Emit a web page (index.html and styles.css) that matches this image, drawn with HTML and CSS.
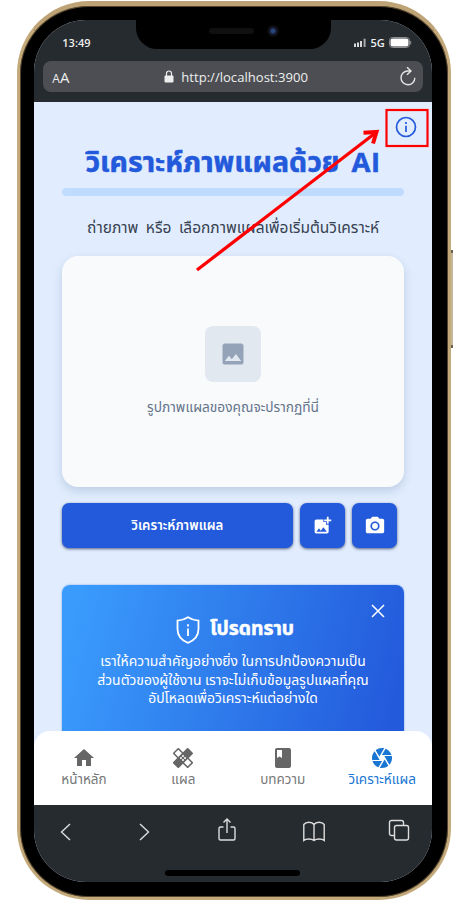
FILE: index.html
```html
<!DOCTYPE html>
<html lang="th">
<head>
<meta charset="utf-8">
<title>วิเคราะห์ภาพแผลด้วย AI</title>
<link rel="stylesheet" href="styles.css">
</head>
<body>
<div class="phone">
  <div class="screen">
    <header class="browser">
      <div class="status">
        <span class="time">13:49</span>
        <span class="signal">
          <svg width="14" height="10" viewBox="0 0 14 10" fill="#d8d8d8"><rect x="1" y="5.5" width="2" height="3.5"/><rect x="4" y="4.5" width="2" height="4.5"/><rect x="7" y="3" width="2" height="6"/><rect x="10.6" y=".7" width="2" height="8.3" fill="#a5a7a9"/></svg>
          <span>5G</span>
          <svg width="23" height="11" viewBox="0 0 23 11"><rect x=".5" y=".5" width="20" height="10" rx="3" fill="none" stroke="#8c8f91"/><rect x="1.5" y="1.5" width="18" height="8" rx="2" fill="#fff"/><path d="M21.7 4v3.5" stroke="#8c8f91"/></svg>
        </span>
      </div>
      <div class="address">
        <span class="aa"><small>A</small>A</span>
        <span class="url">
          <svg width="10" height="13" viewBox="0 0 10 13"><rect x=".5" y="5.5" width="9" height="7" rx="1" fill="#eee"/><path d="M2.500 6V3.500a2.500 2.500 0 0 1 5 0V6" fill="none" stroke="#eee" stroke-width="1.200"/></svg>
          http://localhost:3900
        </span>
        <svg class="reload" width="18" height="20" viewBox="0 0 18 20" fill="none" stroke="#e4e4e4" stroke-width="1.400"><path d="M11.500 4H8.800a6.900 6.900 0 1 0 7 6.800M8 .2l4 3.800-4 3.800"/></svg>
      </div>
    </header>
    <div class="notch"><i class="speaker"></i><i class="camera"></i></div>

    <main class="page">
      <h1><span class="fit">วิเคราะห์ภาพแผลด้วย</span> <span class="latin">AI</span></h1>
      <div class="rule"></div>
      <p class="lead">ถ่ายภาพ หรือ เลือกภาพแผลเพื่อเริ่มต้นวิเคราะห์</p>
      <section class="preview">
        <div class="thumb"><svg width="28" height="28" viewBox="0 0 24 24" fill="#94a3b8"><path d="M21 19V5c0-1.100-.9-2-2-2H5c-1.100 0-2 .9-2 2v14c0 1.100.9 2 2 2h14c1.100 0 2-.9 2-2zM8.500 13.500l2.500 3.010L14.500 12l4.500 6H5l3.500-4.500z"/></svg></div>
        <p>รูปภาพแผลของคุณจะปรากฏที่นี่</p>
      </section>
      <div class="actions">
        <button class="analyse">วิเคราะห์ภาพแผล</button>
        <button class="square"><svg width="21" height="21" viewBox="0 0 24 24" fill="#fff"><path d="M19 7v2.990s-1.990.010-2 0V7h-3s.010-1.990 0-2h3V2h2v3h3v2h-3zm-3 4V8h-3V5H5c-1.100 0-2 .9-2 2v12c0 1.100.9 2 2 2h12c1.100 0 2-.9 2-2v-8h-3zM5 19l3-4 2 3 3-4 4 5H5z"/></svg></button>
        <button class="square"><svg width="22" height="22" viewBox="0 0 24 24" fill="#fff"><circle cx="12" cy="12" r="3.200"/><path d="M9 2L7.170 4H4c-1.100 0-2 .9-2 2v12c0 1.100.9 2 2 2h16c1.100 0 2-.9 2-2V6c0-1.100-.9-2-2-2h-3.170L15 2H9zm3 15c-2.760 0-5-2.240-5-5s2.240-5 5-5 5 2.240 5 5-2.240 5-5 5z"/></svg></button>
      </div>
      <section class="notice">
        <svg class="close" width="14" height="14" viewBox="0 0 14 14" stroke="#fff" stroke-width="1.500"><path d="M1 1l12 12M13 1L1 13"/></svg>
        <div class="notice-head">
          <svg width="24" height="28" viewBox="0 0 24 28" fill="none" stroke="#fff" stroke-width="1.800"><path d="M12 1.200C9 3.200 5 4.300 1.500 4.600V13c0 6.500 4 11.300 10.500 13.800C18.500 24.300 22.500 19.500 22.500 13V4.600C19 4.300 15 3.200 12 1.200z"/><path d="M12 12.500V20M12 8.300v2.200"/></svg>
          <h2>โปรดทราบ</h2>
        </div>
        <p>เราให้ความสำคัญอย่างยิ่ง ในการปกป้องความเป็น<br>ส่วนตัวของผู้ใช้งาน เราจะไม่เก็บข้อมูลรูปแผลที่คุณ<br>อัปโหลดเพื่อวิเคราะห์แต่อย่างใด</p>
      </section>
    </main>

    <nav class="tabs">
      <a><svg width="24" height="24" viewBox="0 0 24 24" fill="#666"><path d="M10 20v-6h4v6h5v-8h3L12 3 2 12h3v8z"/></svg><span>หน้าหลัก</span></a>
      <a><svg width="24" height="24" viewBox="0 0 24 24" fill="#666"><path d="M17.730 12.020l3.980-3.980a1 1 0 0 0 0-1.410l-4.340-4.340a1 1 0 0 0-1.410 0l-3.980 3.980L8 2.290a1 1 0 0 0-1.410 0L2.250 6.630a1 1 0 0 0 0 1.410l3.980 3.980L2.250 16a1 1 0 0 0 0 1.410l4.340 4.340a1 1 0 0 0 1.410 0l3.980-3.980 3.980 3.980a1 1 0 0 0 1.410 0l4.340-4.340a1 1 0 0 0 0-1.410zM12 9a1 1 0 1 0 0 2 1 1 0 0 0 0-2zM7.290 10.960L10.910 7.330L7.290 3.710L3.660 7.330zM10 13a1 1 0 1 0 0-2 1 1 0 0 0 0 2zm2 2a1 1 0 1 0 0-2 1 1 0 0 0 0 2zm2-4a1 1 0 1 0 0 2 1 1 0 0 0 0-2zm2.660 9.340l3.620-3.630-3.620-3.620-3.630 3.630z" fill-rule="evenodd"/></svg><span>แผล</span></a>
      <a><svg width="24" height="24" viewBox="0 0 24 24" fill="#666"><path d="M18 2H6c-1.100 0-2 .9-2 2v16c0 1.100.9 2 2 2h12c1.100 0 2-.9 2-2V4c0-1.100-.9-2-2-2zM6 4h5v8l-2.500-1.500L6 12V4z"/></svg><span>บทความ</span></a>
      <a class="on"><svg width="24" height="24" viewBox="0 0 24 24" fill="#1976d2"><path d="M9.400 10.500l4.770-8.260C13.470 2.090 12.750 2 12 2c-2.400 0-4.600.85-6.320 2.250l3.660 6.350.06-.1zM21.540 9c-.92-2.920-3.150-5.260-6-6.340L11.880 9h9.660zm.26 1h-7.490l.29.500 4.760 8.250C21 16.970 22 14.610 22 12c0-.69-.07-1.350-.2-2zM8.540 12l-3.900-6.750C3.010 7.030 2 9.390 2 12c0 .69.07 1.350.2 2h7.490l-1.150-2zm-6.080 3c.92 2.920 3.150 5.260 6 6.340L12.120 15H2.460zm11.270 0l-3.900 6.760c.7.150 1.420.240 2.170.240 2.400 0 4.600-.85 6.320-2.250l-3.660-6.350-.93 1.600z"/></svg><span>วิเคราะห์แผล</span></a>
    </nav>

    <footer class="toolbar">
      <svg width="20" height="24" viewBox="0 0 20 24"><path d="M14 4L5.500 12 14 20"/></svg>
      <svg width="20" height="24" viewBox="0 0 20 24"><path d="M6 4l8.500 8L6 20"/></svg>
      <svg width="20" height="24" viewBox="0 0 20 24"><path d="M6.500 7H3.500a1.500 1.500 0 0 0-1.500 1.500v10A1.500 1.500 0 0 0 3.500 20h13a1.500 1.500 0 0 0 1.500-1.500v-10A1.500 1.500 0 0 0 16.500 7h-3M10 13V-1M6.500 2.500L10-1l3.500 3.500"/></svg>
      <svg width="24" height="24" viewBox="0 0 24 24"><path d="M12 20V4.500C10 1.500 4 1.500 1.800 4.500V20.500C4 18.500 9.500 18.500 12 20.500 14.500 18.500 20 18.500 22.200 20.500V4.500C20 1.500 14 1.500 12 4.500"/></svg>
      <svg width="22" height="24" viewBox="0 0 22 24"><path d="M6 15.500H3.500A2 2 0 0 1 1.500 13.500v-11a2 2 0 0 1 2-2h10a2 2 0 0 1 2 2V5"/><rect x="6.500" y="5.500" width="14" height="14.500" rx="2"/></svg>
      <i class="home"></i>
    </footer>
  </div>
</div>
<i class="side"></i>
<svg class="info" width="22" height="22" viewBox="0 0 22 22" fill="none" stroke="#2359db" stroke-width="1.700"><circle cx="11" cy="11" r="9.500"/><path d="M11 9.700V16M11 6v2"/></svg>
<svg class="marks" width="453" height="919" viewBox="0 0 453 919" fill="none" stroke="#f00"><rect x="386.500" y="110" width="41" height="36" stroke-width="2.200"/><path d="M197 270L376 132.500" stroke-width="3.300"/><path d="M363.500 132.700L376.500 132L373 143.500" stroke-width="4"/></svg>
</body>
</html>
```
FILE: styles.css
```css
* { box-sizing: border-box; }
body { margin: 0; width: 453px; height: 919px; overflow: hidden; background: #fff; position: relative; font-family: "Noto Sans Thai", "Noto Sans", sans-serif; }
h1, h2, p { margin: 0; font-weight: 400; }
.phone { width: 434px; height: 899px; margin: 1px 0 0 17px; border: 3px solid #c4aa7b; border-top: 5px solid #bda376; border-radius: 72px; background: #000; padding: 14px 14px 14px 14.300px; box-shadow: inset 0 0 0 1px #55452c; }
.screen { position: relative; width: 397.500px; height: 862px; border-radius: 52px; overflow: hidden; background: #e1edfe; display: flex; flex-direction: column; }
.browser { height: 82px; background: #262b2f; flex: none; font-family: "Open Sans", sans-serif; color: #eee; }
.status { height: 41px; display: flex; justify-content: space-between; align-items: center; padding: 4px 20px 0 28px; font-size: 11px; font-weight: 600; }
.signal { display: flex; align-items: center; gap: 4px; }
.address { height: 31px; margin: 0 9px; border-radius: 8px; background: #4c4e53; display: flex; align-items: center; justify-content: space-between; padding: 0 6px 0 9px; font-size: 15px; }
.aa small { font-size: 12px; }
.url { display: flex; gap: 7px; align-items: center; margin-left: 4px; font-size: 13.100px; }
.notch { position: absolute; left: 102px; top: -4px; width: 195px; height: 33px; background: #000; border-radius: 0 0 21px 21px; }
.speaker { position: absolute; left: 73px; top: 12px; width: 45px; height: 6px; border-radius: 3px; background: #101010; }
.camera { position: absolute; left: 131px; top: 9px; width: 12px; height: 12px; border-radius: 50%; background: radial-gradient(circle, #27467c 0 20%, #17172b 40%, #0c0c10 60%); }
.page { flex: 1; min-height: 0; padding: 0 27.500px; }
.fit { display: inline-block; }
h1 { height: 86px; padding-top: 37px; line-height: 50px; white-space: nowrap; display: flex; justify-content: center; gap: 12px; color: #2359db; font-size: 28.500px; font-weight: 700; -webkit-text-stroke: .5px #2359db; }
.latin { font-family: "Open Sans", sans-serif; font-size: 27.500px; letter-spacing: .5px; line-height: 46px; }
.rule { height: 8px; border-radius: 4px; background: #bfdbfe; }
.lead { height: 60px; line-height: 66px; text-align: center; font-size: 15.500px; word-spacing: 3.500px; white-space: nowrap; color: #374151; }
.preview { height: 231px; border-radius: 16px; background: #f8fafc; box-shadow: 0 4px 10px rgba(50,80,130,.2); display: flex; flex-direction: column; align-items: center; padding-top: 70px; }
.thumb { width: 56px; height: 56px; border-radius: 8px; background: #e2e8f0; display: grid; place-items: center; }
.preview p { margin-top: 13px; line-height: 26px; font-size: 13.700px; color: #64748b; }
.actions { margin: 16px 7.500px 37px 0; display: flex; gap: 7.500px; height: 45px; }
button { border: 0; padding: 0; border-radius: 7px; background: #235adb; color: #fff; box-shadow: 0 1px 3px rgba(20,35,80,.7); display: grid; place-items: center; font: 600 13.200px "Noto Sans Thai", "Noto Sans", sans-serif; }
.analyse { flex: 1; }
.square { width: 44.500px; }
.notice { position: relative; height: 160px; border-radius: 8px; background: linear-gradient(105deg, #3a9bfc 5%, #235adb 95%); color: #fff; text-align: center; padding-top: 30px; box-shadow: 0 0 2px #6c9de8; }
.close { position: absolute; right: 19px; top: 19px; }
.notice-head { display: flex; justify-content: center; align-items: center; gap: 10px; height: 29px; margin-bottom: 9px; padding-left: 4px; }
h2 { font-size: 19.300px; font-weight: 700; line-height: 28px; -webkit-text-stroke: .5px #fff; }
.notice p { font-size: 13.900px; line-height: 18.700px; white-space: nowrap; }
.tabs { position: relative; height: 74px; flex: none; margin-top: -16px; background: #fff; border-radius: 16px 16px 0 0; display: grid; grid-template-columns: repeat(4, 1fr); color: #777; font-size: 13.500px; }
.tabs a { display: flex; flex-direction: column; align-items: center; padding-top: 15px; line-height: 20px; }
.tabs .on { color: #1976d2; }
.toolbar { position: relative; height: 77px; flex: none; background: #262b2f; display: flex; padding: 15px 0 0 22px; }
.toolbar svg { fill: none; stroke: #ddd; stroke-width: 1.400; overflow: visible; }
.toolbar svg:nth-child(1) { margin-right: 58px; }
.toolbar svg:nth-child(2) { margin-right: 63px; }
.toolbar svg:nth-child(3) { margin-right: 65px; }
.toolbar svg:nth-child(4) { margin-right: 62px; }
.home { position: absolute; left: 131px; bottom: 6px; width: 135px; height: 6px; border-radius: 3px; background: #000; }
.side { position: absolute; left: 451px; top: 250px; width: 2px; height: 98px; background: #c4b79c; border: solid #6b6151; border-width: 3px 0; }
.info { position: absolute; left: 395px; top: 116px; }
.marks { position: absolute; left: 0; top: 0; }
```
